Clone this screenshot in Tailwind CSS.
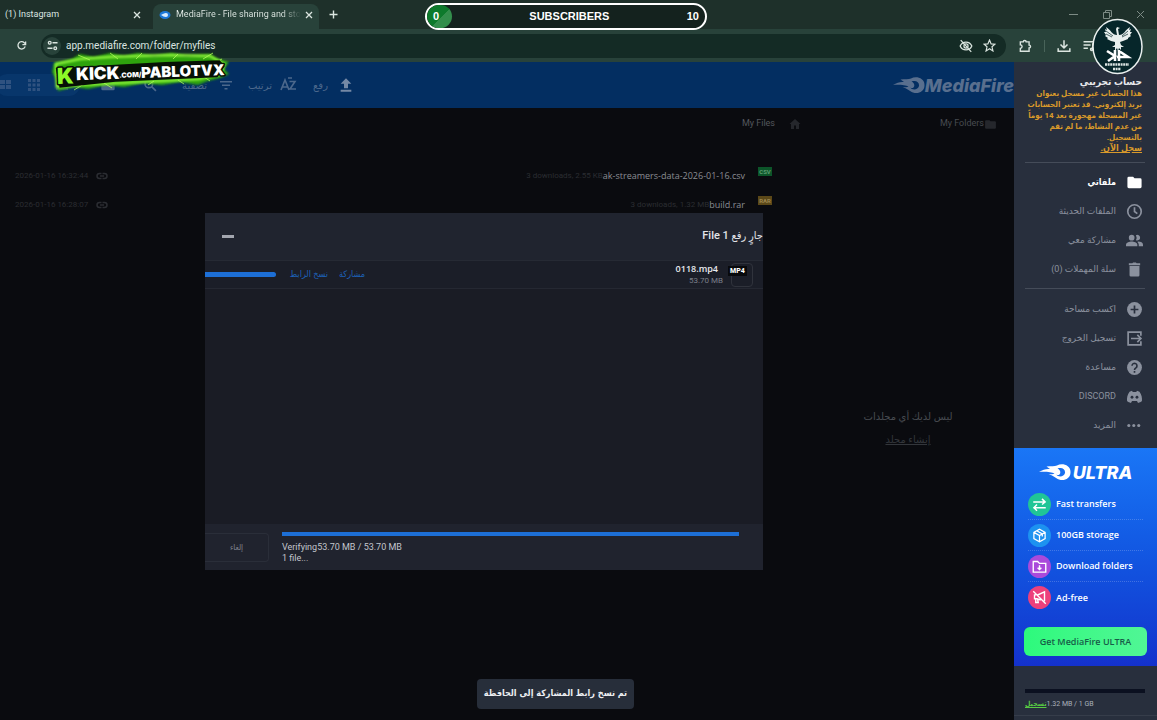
<!DOCTYPE html>
<html lang="ar">
<head>
  <meta charset="UTF-8">
  <meta name="viewport" content="width=device-width, initial-scale=1.0">
  <title>MediaFire - File sharing and storage made simple</title>
  <script src="https://cdn.jsdelivr.net/npm/@tailwindcss/browser@4"></script>
</head>
<body class="relative flex h-screen flex-col overflow-hidden bg-[#0a0b0f] font-['Roboto','DejaVu_Sans',sans-serif] text-[#9ba1ad]">

<svg class="hidden">
  <symbol id="flame" viewBox="0 0 64 36">
    <path fill="currentColor" fill-rule="evenodd" d="M0 17C8 12 15 10 22 11L15 6C24 5 31 6 36 4C46-2 64 3 63 18C63 30 50 36 40 32C33 29 28 23 19 22C25 21 28 22 31 20C25 17 12 16 0 17ZM37 10C43 13 44 19 41 22C39 24 36 23 34 22C39 28 50 27 52 19C53 11 46 7 37 10Z"/>
  </symbol>
  <symbol id="folder" viewBox="0 0 24 24"><path fill="currentColor" d="M10 4H4a2 2 0 0 0-2 2v12a2 2 0 0 0 2 2h16a2 2 0 0 0 2-2V8a2 2 0 0 0-2-2h-8z"/></symbol>
  <symbol id="link" viewBox="0 0 24 24"><path fill="none" stroke="currentColor" stroke-width="3" d="M11 7H7a5 5 0 0 0 0 10h4M13 7h4a5 5 0 0 1 0 10h-4M8 12h8"/></symbol>
</svg>

<!-- browser -->
<header class="bg-[#1e302a] text-[#dbe5e0]" dir="ltr">
  <div class="flex h-[29px] items-stretch text-[9px]">
    <div class="flex w-[153px] items-center justify-between pr-3 pl-[5px]">
      <span>(1) Instagram</span>
      <button aria-label="Close tab"><svg class="size-[8px]" viewBox="0 0 8 8" fill="none" stroke="currentColor" stroke-width="1.3"><path d="M1 1l6 6M7 1L1 7"/></svg></button>
    </div>
    <div class="mt-1 flex w-[166px] items-center rounded-t-lg bg-[#28423a] pr-2 pb-1 pl-[6px]">
      <svg class="mr-[5px] h-[10px] w-[12px] shrink-0" viewBox="0 0 12 10"><ellipse cx="6" cy="5" rx="5.5" ry="4" fill="#1d78d8"/><path fill="#d7ecff" d="M2 5c2-1 3-2 5-2a2 2 0 0 1 0 4C5 7 4 6 2 5z"/></svg>
      <span class="grow bg-linear-to-r from-[#e6eeea] from-85% to-[#28423a] bg-clip-text whitespace-nowrap text-transparent">MediaFire - File sharing and sto</span>
      <button class="ml-1" aria-label="Close tab"><svg class="size-[8px]" viewBox="0 0 8 8" fill="none" stroke="currentColor" stroke-width="1.3"><path d="M1 1l6 6M7 1L1 7"/></svg></button>
    </div>
    <button class="ml-2.5" aria-label="New tab"><svg class="size-[9px]" viewBox="0 0 9 9" stroke="currentColor" stroke-width="1.4"><path d="M4.500 0.500v8M0.500 4.500h8"/></svg></button>
    <div class="ml-auto flex w-[88px] items-center justify-between pr-3 text-[#7d8b85]">
      <svg class="size-[9px]" viewBox="0 0 9 9" stroke="currentColor"><path d="M0 4.500h9"/></svg>
      <svg class="size-[9px]" viewBox="0 0 9 9" fill="none" stroke="currentColor"><path d="M.5 2.500h6v6h-6zM2.500 2.500v-2h6v6h-2"/></svg>
      <svg class="size-[9px]" viewBox="0 0 9 9" stroke="currentColor"><path d="M1 1l7 7M8 1L1 8"/></svg>
    </div>
  </div>
  <div class="flex h-[33px] items-center bg-[#28423a] pl-4">
    <button class="w-[25px]" aria-label="Reload"><svg class="size-[11px]" viewBox="0 0 24 24" fill="none" stroke="currentColor" stroke-width="2.800"><path d="M20 14a8 8 0 1 1-2-8l3 3"/><path d="M21 3v7h-7"/></svg></button>
    <div class="flex h-[24px] min-w-0 grow items-center rounded-full bg-[#142b25] pr-2.5 pl-[2px]">
      <span class="flex size-[18px] items-center justify-center rounded-full bg-[#28423a]"><svg class="size-[11px]" viewBox="0 0 24 24" fill="none" stroke="currentColor" stroke-width="2.800"><circle cx="6" cy="6" r="3"/><path d="M12 6h11M1 18h11"/><circle cx="18" cy="18" r="3"/></svg></span>
      <input class="ml-[5px] w-[300px] bg-transparent text-[10px] outline-none" aria-label="Address" value="app.mediafire.com/folder/myfiles">
      <svg class="mr-2.5 ml-auto size-[14px]" viewBox="0 0 24 24" fill="none" stroke="currentColor" stroke-width="2.200"><path d="M2 12c4-9 16-9 20 0-4 9-16 9-20 0z"/><circle cx="12" cy="12" r="3.500"/><path d="M3 2l18 20"/></svg>
      <svg class="size-[13px]" viewBox="0 0 24 24" fill="none" stroke="currentColor" stroke-width="2.200"><path d="M12 2l3 7 7 .6-5.400 4.800L18.300 22 12 17.900 5.700 22l1.700-7.600L2 9.600 9 9z"/></svg>
    </div>
    <div class="flex w-[151px] items-center pl-3">
      <svg class="size-[14px]" viewBox="0 0 24 24" fill="none" stroke="currentColor" stroke-width="2.400"><path d="M4 5h5a2.500 2.500 0 0 1 5 0h5v5.500a2.500 2.500 0 0 1 0 5V21H4v-5a3 3 0 0 0 0-6z"/></svg>
      <span class="mx-3 h-3 w-px bg-[#49645a]"></span>
      <svg class="size-[14px]" viewBox="0 0 24 24" fill="none" stroke="currentColor" stroke-width="2.600"><path d="M12 2v13M6 9.500l6 6 6-6M2 16v5h20v-5"/></svg>
      <svg class="ml-3 size-[13px]" viewBox="0 0 24 24" fill="none" stroke="currentColor" stroke-width="2.800"><path d="M1 5h18M1 11h13M1 17h8M18 8v11"/><circle cx="16" cy="19" r="2"/></svg>
    </div>
  </div>
</header>

<div class="flex min-h-0 grow" dir="ltr">
  <main class="relative min-w-0 grow">
    <!-- toolbar -->
    <div class="flex h-[46px] items-center bg-[#032e61] text-[10px] text-[#4c688c]">
      <div class="-ml-1 flex h-[22px] items-center gap-4 rounded-full bg-[#08366b] pr-3 pl-1 text-[#2f5280]">
        <svg class="size-[12px]" viewBox="0 0 12 12" fill="currentColor"><path d="M0 1h5v4H0zM6 1h5v4H6zM0 6h5v4H0zM6 6h5v4H6z"/></svg>
        <svg class="size-[12px]" viewBox="0 0 12 12" fill="currentColor"><path d="M0 0h3v3H0zM4.500 0h3v3h-3zM9 0h3v3H9zM0 4.500h3v3H0zM4.500 4.500h3v3h-3zM9 4.500h3v3H9zM0 9h3v3H0zM4.500 9h3v3h-3zM9 9h3v3H9z"/></svg>
        <svg class="size-[12px]" viewBox="0 0 12 12" fill="currentColor"><path d="M0 1h12v2H0zM0 5h12v2H0zM0 9h12v2H0z"/></svg>
      </div>
      <svg class="ml-5 size-[16px]"><use href="#folder"/></svg>
      <svg class="ml-7 size-[13px]" viewBox="0 0 24 24" fill="none" stroke="currentColor" stroke-width="3"><circle cx="9" cy="9" r="7"/><path d="M14 14l8 8"/></svg>
      <button class="ml-6 w-[27px] text-center" dir="rtl">تصفية</button>
      <svg class="ml-3 size-[12px]" viewBox="0 0 12 12" fill="currentColor"><path d="M0 2h12v1.500H0zM2 5.500h8V7H2zM4.500 9h3v1.500h-3z"/></svg>
      <button class="ml-4 w-[24px]" dir="rtl">ترتيب</button>
      <svg class="ml-2 h-[16px] w-[17px]" viewBox="0 0 17 16" fill="none" stroke="currentColor" stroke-width="1.600"><path d="M1 13L5 3l4 10M2.500 10h5M9.500 4.500H15L10 12h6M8 1h4"/></svg>
      <button class="ml-4 w-[15px]" dir="rtl">رفع</button>
      <svg class="ml-2.5 size-[16px]" viewBox="0 0 24 24" fill="#7589a5"><path d="M12 2L4 10h5v7h6v-7h5zM4 19h16v3H4z"/></svg>
      <div class="ml-auto flex items-center text-[#596f8e]">
        <svg class="h-[19px] w-[32px]"><use href="#flame"/></svg>
        <span class="font-['Inter',sans-serif] text-[18px] font-extrabold italic">MediaFire</span>
      </div>
    </div>

    <!-- file list and folder column -->
    <div class="flex text-[9px] text-[#484b51]">
      <section class="min-w-0 grow">
        <div class="flex h-[32px] items-center justify-end gap-3.5 pr-[9px]">
          <span class="text-[#54575d]">My Files</span>
          <svg class="size-[12px] text-[#25272c]" viewBox="0 0 24 24" fill="currentColor"><path d="M12 2L1 12h3v10h6v-7h4v7h6V12h3z"/></svg>
        </div>
        <ul class="mt-[21px]">
          <li class="flex h-[29px] items-center pr-[38px] pl-[15px] text-[8px] text-[#2b2d32]">
            <span>2026-01-16 16:32:44</span><svg class="ml-2 size-[12px]"><use href="#link"/></svg>
            <span class="ml-auto">3 downloads, 2.55 KB</span>
            <a href="#" class="font-['Open_Sans',sans-serif] text-[9px] text-[#8a8d93]">ak-streamers-data-2026-01-16.csv</a>
            <span class="mb-2 ml-[13px] flex h-[9px] w-[14px] items-center justify-center bg-[#0c5529] text-[6px] font-bold text-[#5d9c72]">CSV</span>
          </li>
          <li class="flex h-[29px] items-center pr-[38px] pl-[15px] text-[8px] text-[#2b2d32]">
            <span>2026-01-16 16:28:07</span><svg class="ml-2 size-[12px]"><use href="#link"/></svg>
            <span class="ml-auto">3 downloads, 1.32 MB</span>
            <a href="#" class="font-['Open_Sans',sans-serif] text-[9px] text-[#8a8d93]">build.rar</a>
            <span class="mb-2 ml-[13px] flex h-[9px] w-[14px] items-center justify-center bg-[#5b4818] text-[6px] font-bold text-[#9b8650]">RAR</span>
          </li>
        </ul>
      </section>
      <aside class="w-[204px] shrink-0">
        <div class="flex h-[32px] items-center justify-end pr-[17px]">
          <span>My Folders</span>
          <svg class="size-[13px] text-[#25272c]"><use href="#folder"/></svg>
        </div>
        <div class="mt-[269px] flex flex-col items-center gap-2 pr-2 text-[10px] leading-[15px]" dir="rtl">
          <p>ليس لديك أي مجلدات</p>
          <a href="#" class="text-[#33363b] underline">إنشاء مجلد</a>
        </div>
      </aside>
    </div>

    <!-- upload dialog -->
    <section class="absolute top-[151px] left-[205px] flex h-[357px] w-[558px] flex-col bg-[#1a1c25] font-['Roboto','DejaVu_Sans_Condensed',sans-serif]">
      <div class="flex h-[48px] items-center justify-between border-b border-[#262a34] bg-[#20242f] pl-[17px]">
        <button class="h-[3px] w-[12px] bg-[#a3a6af]" aria-label="Minimize"></button>
        <h2 class="text-[11px] font-medium text-[#e3e5ea]" dir="rtl">جارٍ رفع 1 File</h2>
      </div>
      <div class="flex h-[28px] items-center border-b border-[#252832] bg-[#1b1e28] pr-[10px]">
        <span class="h-[5px] w-[71px] rounded-r-sm bg-[#1d6fd6]"></span>
        <a href="#" class="ml-[14px] w-[38px] text-[9px] whitespace-nowrap text-[#1d62b8]" dir="rtl">نسخ الرابط</a>
        <a href="#" class="ml-[11px] text-[9px] text-[#1d62b8]" dir="rtl">مشاركة</a>
        <div class="ml-auto text-right leading-[12px]">
          <p class="pr-[5px] font-['Open_Sans',sans-serif] text-[9px] font-semibold text-[#e8eaee]">0118.mp4</p>
          <p class="text-[8px] text-[#7b7f89]">53.70 MB</p>
        </div>
        <div class="relative ml-2 h-[24px] w-[22px] rounded-sm border border-[#30333c]">
          <span class="absolute top-0.5 -left-1 bg-[#08090c] px-0.5 text-[7px] leading-[10px] font-extrabold text-white">MP4</span>
        </div>
      </div>
      <div class="mt-auto flex h-[46px] bg-[#20232e]">
        <button class="mt-[9px] h-[29px] w-[64px] rounded-r-sm border border-l-0 border-[#2a2e39] text-[8px] text-[#80848e]" dir="rtl">إلغاء</button>
        <div class="mr-6 ml-[13px] grow pt-2 text-[9px] leading-[11px] text-[#c3c6cd]">
          <div class="mb-1.5 h-[4px] bg-[#1d6fd6]"></div>
          <p>Verifying53.70 MB / 53.70 MB</p>
          <p>1 file...</p>
        </div>
      </div>
    </section>
    <div class="absolute bottom-[11px] left-[477px] flex h-[30px] w-[157px] items-center justify-center rounded-sm bg-[#272e3a] font-['DejaVu_Sans_Condensed',sans-serif] text-[9px] font-bold whitespace-nowrap text-[#eceef2]" role="status" dir="rtl">تم نسخ رابط المشاركة إلى الحافظة</div>
  </main>

  <!-- sidebar -->
  <aside class="flex w-[143px] shrink-0 flex-col overflow-hidden bg-[#282f3d]">
    <div class="pt-[13px] pr-[15px] font-['Roboto','DejaVu_Sans_Condensed',sans-serif] text-[8px] leading-[11px] font-bold whitespace-nowrap text-[#d99a2b]" dir="rtl">
      <h1 class="text-[10px] leading-[13px] text-[#e6e8ec]">حساب تجريبي</h1>
      <p>هذا الحساب غير مسجل بعنوان<br>بريد إلكتروني. قد تعتبر الحسابات<br>غير المسجلة مهجورة بعد 14 يوماً<br>من عدم النشاط، ما لم تقم<br>بالتسجيل.</p>
      <a href="#" class="text-[9px] underline">سجل الآن.</a>
    </div>
    <hr class="mt-2 mr-3 mb-[5px] ml-[11px] border-[#454c59]">
    <nav class="text-[9px] text-[#8b919e]" dir="rtl">
      <a href="#" class="flex h-[29px] items-center gap-2.5 pr-[14px] font-['DejaVu_Sans_Condensed',sans-serif] font-bold text-white"><svg class="size-[17px]"><use href="#folder"/></svg>ملفاتي</a>
      <a href="#" class="flex h-[29px] items-center gap-2.5 pr-[14px]"><svg class="size-[17px]" viewBox="0 0 24 24" fill="none" stroke="currentColor" stroke-width="2.400"><circle cx="12" cy="12" r="9.500"/><path d="M12 6v6l4 3"/></svg>الملفات الحديثة</a>
      <a href="#" class="flex h-[29px] items-center gap-2.5 pr-[14px]"><svg class="size-[17px]" viewBox="0 0 24 24" fill="currentColor"><circle cx="8" cy="8" r="4"/><path d="M0 20v-2c0-3 5-4.500 8-4.500s8 1.500 8 4.500v2z"/><path d="M14 4.500a4 4 0 1 1 0 7 7 7 0 0 0 0-7zM17 13.500c4 0 7 1.500 7 4.500v2h-6v-2c0-2-1-3-2-4z"/></svg>مشاركة معي</a>
      <a href="#" class="flex h-[29px] items-center gap-2.5 pr-[14px]"><svg class="size-[17px]" viewBox="0 0 24 24" fill="currentColor"><path d="M5 7h14v13a2 2 0 0 1-2 2H7a2 2 0 0 1-2-2zM4 3h5l1-1h4l1 1h5v3H4z"/></svg>سلة المهملات (0)</a>
      <hr class="mt-1 mr-3 mb-1.5 ml-[11px] border-[#454c59]">
      <a href="#" class="flex h-[29px] items-center gap-2.5 pr-[14px]"><svg class="size-[17px]" viewBox="0 0 24 24"><circle cx="12" cy="12" r="10.500" fill="currentColor"/><path d="M12 6.500v11M6.500 12h11" stroke="#282f3d" stroke-width="2.400"/></svg>اكسب مساحة</a>
      <a href="#" class="flex h-[29px] items-center gap-2.5 pr-[14px]"><svg class="size-[17px]" viewBox="0 0 24 24" fill="none" stroke="currentColor" stroke-width="2.400"><path d="M21 8V3H3v18h18v-5M7 12h14M16 7l5 5-5 5"/></svg>تسجيل الخروج</a>
      <a href="#" class="flex h-[29px] items-center gap-2.5 pr-[14px]"><svg class="size-[17px]" viewBox="0 0 24 24"><circle cx="12" cy="12" r="10.500" fill="currentColor"/><path d="M8.500 9.500a3.500 3.500 0 1 1 5.500 3c-1.500 1-2 1.500-2 3M12 17v2.500" fill="none" stroke="#282f3d" stroke-width="2.300"/></svg>مساعدة</a>
      <a href="#" class="flex h-[29px] items-center gap-2.5 pr-[14px]"><svg class="size-[17px]" viewBox="0 0 24 24"><path fill="currentColor" d="M8.500 4L5 5.200C2 9 1 14 1.500 18.500 3 20 5 20.500 7 21l1.500-2.500h7L17 21c2-.5 4-1 5.500-2.500C23 14 22 9 19 5.200L15.500 4l-1 1.800h-5z"/><g fill="#282f3d"><circle cx="8.500" cy="13" r="2"/><circle cx="15.500" cy="13" r="2"/></g></svg>DISCORD</a>
      <a href="#" class="flex h-[29px] items-center gap-2.5 pr-[14px]"><svg class="size-[17px]" viewBox="0 0 24 24" fill="currentColor"><circle cx="4" cy="12" r="2.200"/><circle cx="11" cy="12" r="2.200"/><circle cx="18" cy="12" r="2.200"/></svg>المزيد</a>
    </nav>

    <section class="mt-2 bg-linear-to-b from-[#1a76f6] to-[#1431cc] px-[10px] pt-[13px] pb-2.5 font-['Open_Sans',sans-serif] text-white">
      <div class="mb-[6px] flex h-[22px] items-center justify-center">
        <svg class="mr-0.5 h-[19px] w-[32px]"><use href="#flame"/></svg>
        <span class="font-['Inter',sans-serif] text-[18px] font-extrabold italic">ULTRA</span>
      </div>
      <ul class="text-[9px] font-semibold whitespace-nowrap">
        <li class="mx-1 flex h-[31px] items-center gap-[5px] border-b border-dotted border-white/20"><span class="flex size-[23px] items-center justify-center rounded-full bg-[#20c596]"><svg class="size-[15px]" viewBox="0 0 24 24" fill="none" stroke="currentColor" stroke-width="2.400"><path d="M2 8h18M16 3l5 5-5 4M22 17H4M8 12l-5 5 5 5"/></svg></span>Fast transfers</li>
        <li class="mx-1 flex h-[31px] items-center gap-[5px] border-b border-dotted border-white/20"><span class="flex size-[23px] items-center justify-center rounded-full bg-[#1d92f0]"><svg class="size-[15px]" viewBox="0 0 24 24" fill="none" stroke="currentColor" stroke-width="2"><path d="M12 2l9 5v10l-9 5-9-5V7zM3 7l9 5 9-5M12 12v10M7.500 4.500l9 5v4"/></svg></span>100GB storage</li>
        <li class="mx-1 flex h-[31px] items-center gap-[5px] border-b border-dotted border-white/20"><span class="flex size-[23px] items-center justify-center rounded-full bg-[#aa4adb]"><svg class="size-[15px]" viewBox="0 0 24 24" fill="none" stroke="currentColor" stroke-width="2.200"><path d="M2 4h7l3 3h10v14H2zM12 10v7M9 14l3 3 3-3"/></svg></span>Download folders</li>
        <li class="mx-1 flex h-[31px] items-center gap-[5px]"><span class="flex size-[23px] items-center justify-center rounded-full bg-[#ed407c]"><svg class="size-[15px]" viewBox="0 0 24 24" fill="none" stroke="currentColor" stroke-width="2.200"><path d="M9 8l11-5v15M14 16l-6-2H4V8h2M6 14v6h4l-1-5M2 2l20 20"/></svg></span>Ad-free</li>
      </ul>
      <button class="mt-3.5 h-[29px] w-full rounded-md bg-linear-to-r from-[#2cfa7c] to-[#50f695] text-[9px] font-semibold whitespace-nowrap text-[#175c48]">Get MediaFire ULTRA</button>
    </section>
    <div class="mt-auto mb-1 border-b border-[#363d4a] pr-3 pl-[11px] text-[7px]">
      <div class="mb-1.5 h-[4px] bg-[#0b1020]"></div>
      <div class="mb-[5px] flex leading-[11px] whitespace-nowrap"><a href="#" class="font-['DejaVu_Sans_Condensed',sans-serif] font-bold text-[#57c943] underline">تسجيل</a><span class="text-[#a9afba]">1.32 MB / 1 GB</span></div>
    </div>
  </aside>
</div>

<!-- stream overlays -->
<div class="absolute top-[3px] left-[425px] flex h-[27px] w-[282px] items-center justify-between overflow-hidden rounded-full border-2 border-white bg-[#14221e] pr-1.5 font-['Liberation_Sans',sans-serif] text-[11px] font-bold text-white" dir="ltr">
  <span class="flex h-full w-[25px] items-center rounded-full bg-linear-135 from-[#0d7a2c] from-55% to-[#338e4c] to-55% pl-1.5">0</span>
  <span>SUBSCRIBERS</span>
  <span>10</span>
</div>
<svg class="absolute top-[50px] left-[50px] h-[44px] w-[182px]" viewBox="0 0 182 44">
  <defs><filter id="glow" x="-10%" y="-30%" width="120%" height="160%"><feGaussianBlur stdDeviation="1.200"/></filter></defs>
  <path filter="url(#glow)" fill="#2fa30d" d="M4 13L22 9 30 4 44 7 60 3 74 6 88 3 104 6 122 3 136 6 160 4 166 8 179 12 174 19 179 24 170 28 158 31 148 35 130 32 112 35 94 33 74 37 56 35 38 39 24 37 8 41 6 29 2 22z"/>
  <path fill="none" stroke="#8cf53a" stroke-width="2.500" filter="url(#glow)" d="M6 14L30 9l30-2 28-1 32-1 40 1 14 8-3 10-22 5-40 2-40 2-40 2-22 2z"/>
  <path fill="none" stroke="#b0fa5a" stroke-width=".8" d="M28 5l12 5M60 3l8 6M92 3l-6 6M128 4l-5 5M163 3l-10 6M24 40l10-6M62 38l-8-5M98 35l6-4M134 34l-6-4M160 31l-6-4M172 9l-8 4"/>
  <g font-family="Inter, sans-serif" font-weight="900" stroke="#071006" stroke-linejoin="round" paint-order="stroke" transform="rotate(-2 90 22)">
    <path fill="#071006" stroke="none" d="M6 15l110-2 54 0 5 6-8 11-102 1-56 4z"/>
    <text x="7" y="31" font-size="22" fill="#8dfa28" stroke-width="3">K</text>
    <text x="26" y="28" font-size="17" fill="#fff" stroke-width="3">KICK</text>
    <text x="91" y="28" font-size="15" fill="#fff" stroke-width="3">PABLOTVX</text>
    <text x="69" y="27" font-size="7" fill="#fff" stroke-width="1">.COM/</text>
  </g>
</svg>
<svg class="absolute top-[18px] right-[14px] h-[57px] w-[51px]" viewBox="0 0 51 57">
  <ellipse cx="25.500" cy="28.500" rx="24.500" ry="27" fill="#06262a" stroke="#e9efee" stroke-width="1.500"/>
  <path fill="#e9efee" d="M24 11l1-2 3 1-2 1 1 6c5 0 6-5 11-8l-1 3 2-1-1 3 2 0-2 3 1 1-3 2 0 1-5 2-3 1 1 3 3 2-3 0 0 3-2-2-1 3-1-3-2 3v-4l-3 0 3-2 0-3-4-1-4-2 1-1-3-2 1-1-2-3h2l-1-3 2 1-1-3c5 3 6 8 11 8z"/>
  <path fill="none" stroke="#06262a" stroke-width=".7" d="M14 13l7 5M14 16l6 3M36 13l-6 5M36 16l-6 3"/>
  <path fill="none" stroke="#fff" stroke-width="2.600" d="M23 32v11M15 33l8 5-7 5M27 32v11M27 33l9 6H25"/>
  <path stroke="#dbe4e2" stroke-width="2.600" stroke-dasharray="2 .6" d="M13 46.500h24M21 51h8"/>
</svg>
</body>
</html>
